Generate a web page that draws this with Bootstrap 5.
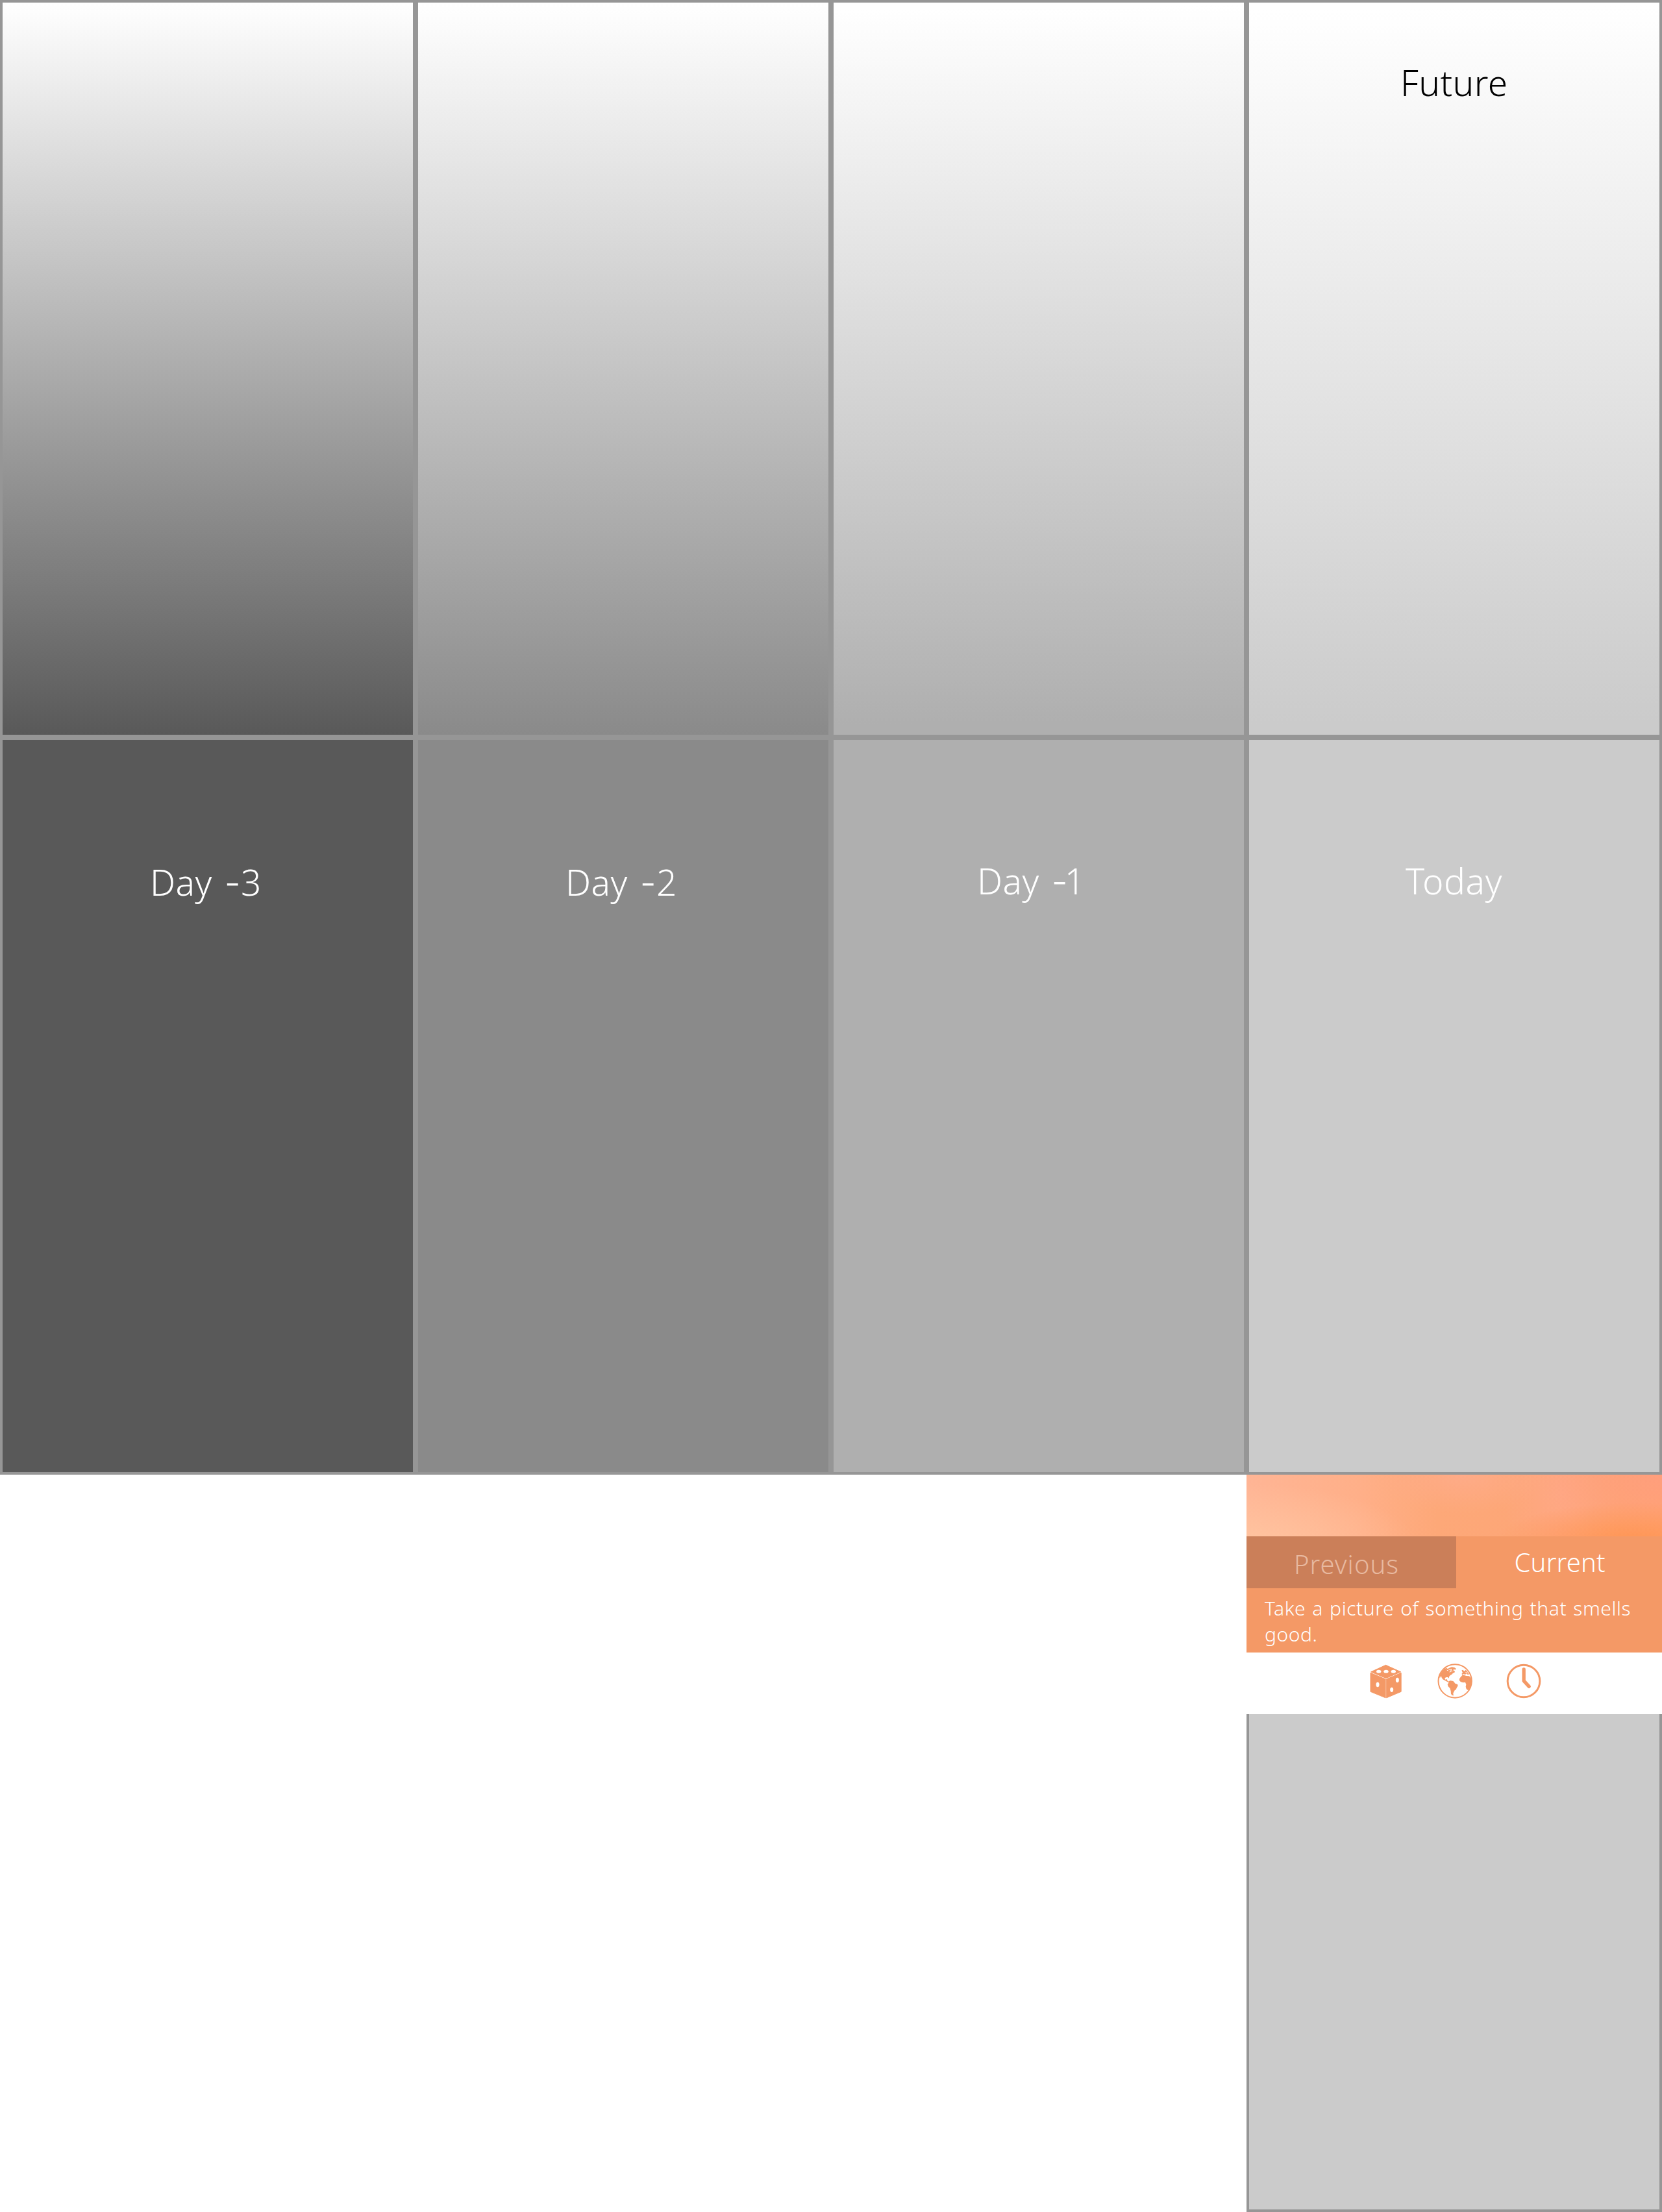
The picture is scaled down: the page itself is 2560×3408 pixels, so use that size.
<!DOCTYPE html>
<html lang="en">
<head>
<meta charset="utf-8">
<meta name="viewport" content="width=device-width, initial-scale=1">
<title>Day timeline</title>
<link href="https://cdn.jsdelivr.net/npm/bootstrap@5.3.0/dist/css/bootstrap.min.css" rel="stylesheet">
<style>
body{background:#fff;font-family:"Noto Sans","Open Sans",sans-serif;font-weight:300;min-width:2560px}
.board{width:2560px}
.day{height:1136px;border:4px solid #969696}
.day-label{font-size:55px;line-height:60px;font-weight:300;letter-spacing:.4px;white-space:nowrap}
.day h2{margin:0}
.dash{font-family:Inter,sans-serif;font-weight:300}
.d3{background:#595959}.d2{background:#8a8a8a}.d1{background:#afafaf}.d0{background:#cbcbcb}
.f3{background:linear-gradient(180deg,#fff,#595959)}
.f2{background:linear-gradient(180deg,#fff,#8a8a8a)}
.f1{background:linear-gradient(179.300deg,#fff 1%,#afafaf 98%)}
.f0{background:linear-gradient(179.300deg,#fff 1%,#cbcbcb 98%)}
.future-pad{padding:93px 0 0 233px}
.d3{padding:189px 0 0 227px}.d2{padding:189px 0 0 227px}.d1{padding:187px 0 0 221px}.today-pad{padding:187px 0 0 241px}
.d3 .day-label,.d2 .day-label,.d1 .day-label{word-spacing:4.500px}
.narrow-gap{letter-spacing:-5px}
.today-pad .day-label{letter-spacing:.6px}
.phone{width:640px;height:1136px}
.hero{height:95px;background:
 radial-gradient(ellipse 210px 58px at 93% 106%,#ff9655 0,rgba(255,150,85,.5) 50%,rgba(255,150,85,0) 100%),
 radial-gradient(ellipse 190px 100px at 100% 0,#ff9e7c 0,rgba(255,158,124,0) 100%),
 radial-gradient(ellipse 130px 60px at 52% 0,rgba(255,172,140,.8) 0,rgba(255,172,140,0) 100%),
 radial-gradient(ellipse 90px 150px at 76% 30%,rgba(255,168,134,.9) 0,rgba(255,168,134,0) 100%),
 radial-gradient(ellipse 260px 90px at 0 110%,#ffc4a0 0,rgba(255,194,158,0) 100%),
 linear-gradient(90deg,#ffb595 0,#ffaf88 28%,#fda878 46%,#fda677 70%,#ffa374 100%)}
.task{background:#f49966;height:179px}
.tab-item{height:80px;font-size:40px;line-height:40px;white-space:nowrap}
.tab-prev{width:322.5px;background:#cb7f59;color:#e8b9a0;padding:23px 0 0 73px;letter-spacing:1px}
.tab-cur{padding:20px 0 0 90px;letter-spacing:.2px}
.prompt{font-size:30px;line-height:40px;padding:11px 28px 0;letter-spacing:.55px;word-spacing:1.8px;white-space:nowrap}
.tools{height:95px;gap:52px;padding:17px 0 0 188px}
.tools svg{width:54px;height:54px;display:block}
.slot{height:767px;border:4px solid #969696;border-top:0;background:#cbcbcb}
</style>
<script src="https://cdn.jsdelivr.net/npm/bootstrap@5.3.0/dist/js/bootstrap.bundle.min.js"></script>
</head>
<body>
<main class="board">
 <div class="row row-cols-4 g-0">
  <div class="col day f3"></div>
  <div class="col day f2"></div>
  <div class="col day f1"></div>
  <div class="col day f0 future-pad text-black"><h2 class="day-label">Future</h2></div>
 </div>
 <div class="row row-cols-4 g-0 text-white">
  <div class="col day d3"><h2 class="day-label">Day <span class="dash">-</span>3</h2></div>
  <div class="col day d2"><h2 class="day-label">Day <span class="dash">-</span>2</h2></div>
  <div class="col day d1"><h2 class="day-label">Day <span class="dash narrow-gap">-</span>1</h2></div>
  <div class="col day d0 today-pad"><h2 class="day-label">Today</h2></div>
 </div>
 <section class="phone ms-auto d-flex flex-column">
  <div class="hero"></div>
  <div class="task text-white">
   <div class="d-flex">
    <div class="tab-item tab-prev">Previous</div>
    <div class="tab-item tab-cur flex-fill">Current</div>
   </div>
   <p class="prompt m-0">Take a picture of something that smells<br>good.</p>
  </div>
  <div class="tools d-flex bg-white">
   <svg viewBox="54 42 162 162" aria-label="Dice">
    <g fill="#f49966" stroke="#f49966" stroke-width="3" stroke-linejoin="round">
     <path d="M133.500 49L203 80.500L135 110L65 80.500Z"/>
     <path d="M63 85L132.500 114V200.500L63 172Z"/>
     <path d="M204.500 85L137 114V200.500L204.500 172Z"/>
    </g>
    <g fill="#fff"><ellipse cx="101" cy="79" rx="11" ry="7.500"/><ellipse cx="135" cy="79" rx="11" ry="7.500"/><ellipse cx="169" cy="79" rx="11" ry="7.500"/>
    <ellipse cx="96" cy="139.500" rx="7.500" ry="11"/><ellipse cx="187" cy="118.500" rx="7.500" ry="11"/><ellipse cx="161" cy="163" rx="7.500" ry="11"/></g>
   </svg>
   <svg viewBox="57 40 162 162" aria-label="Globe">
    <circle cx="138.500" cy="121" r="77" fill="#fff" stroke="#f49966" stroke-width="6"/>
    <g fill="#f49966">
     <path d="M66 98Q74 78 89 65L99 60L104 64L112 60L124 56L137 59L143 63L140 69L133 66L130 71L138 76L136 82L129 84L124 90L117 94L111 101L110 108L104 103L96 104L91 108L94 114L101 112L103 119L108 122L106 126L97 121L90 117L82 113L77 105L74 97L68 108Z"/>
     <path d="M109 122L117 119L130 121L136 128L139 132L150 136L152 143L147 151L143 160L137 164L133 171L130 177L131 185L133 188L125 187L120 180L119 167L115 154L107 146L104 137L108 130Z"/>
     <path d="M166 101L172 94L181 94L191 97L204 98L213 108L216 125L210 147L199 164L191 158L188 147L190 137L186 127L175 128L165 125L158 117L160 108Z"/>
     <path d="M169 88L174 82L171 77L177 73L183 75L188 69Q199 79 204 91L195 90L191 86L185 92L179 88L174 93Z"/>
     <path d="M169 71L176 69L179 75L173 77Z"/>
    </g>
    <path d="M108 65L115 69L122 66L119 73L127 75M101 70L108 74M113 79L121 77M187 81L197 83" fill="none" stroke="#fff" stroke-width="3"/>
   </svg>
   <svg viewBox="58.500 39 162 162" aria-label="Clock">
    <circle cx="139.500" cy="120" r="74.500" fill="none" stroke="#f49966" stroke-width="9"/>
    <path d="M140 66V119L164 145" fill="none" stroke="#f49966" stroke-width="16" stroke-linecap="round" stroke-linejoin="round"/>
   </svg>
  </div>
  <div class="slot"></div>
 </section>
</main>
</body>
</html>
